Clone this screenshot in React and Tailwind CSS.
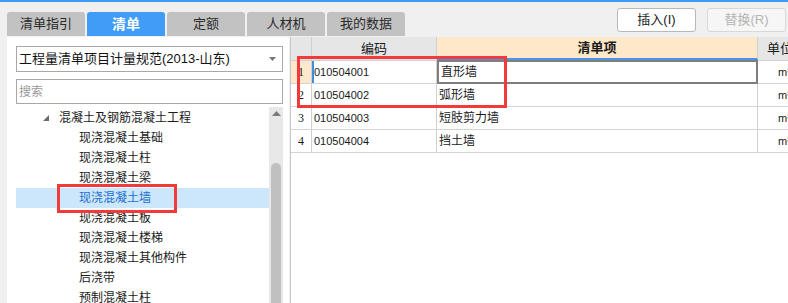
import React from "react";

const F = { fontFamily: '"Liberation Sans", "Noto Sans CJK SC", sans-serif' };

const tabs = ["清单指引", "清单", "定额", "人材机", "我的数据"];
const tree = [
  { t: "混凝土及钢筋混凝土工程", lvl: 0 },
  { t: "现浇混凝土基础", lvl: 1 },
  { t: "现浇混凝土柱", lvl: 1 },
  { t: "现浇混凝土梁", lvl: 1 },
  { t: "现浇混凝土墙", lvl: 1, sel: true },
  { t: "现浇混凝土板", lvl: 1 },
  { t: "现浇混凝土楼梯", lvl: 1 },
  { t: "现浇混凝土其他构件", lvl: 1 },
  { t: "后浇带", lvl: 1 },
  { t: "预制混凝土柱", lvl: 1 },
];
const rows = [
  ["1", "010504001", "直形墙"],
  ["2", "010504002", "弧形墙"],
  ["3", "010504003", "短肢剪力墙"],
  ["4", "010504004", "挡土墙"],
];

export default function App() {
  return (
    <div className="relative w-[788px] h-[303px] overflow-hidden bg-[#f0f0f0] text-[#1a1a1a]" style={F}>
      <div className="h-[2px] bg-[#3d9cf2]" />
      {/* top bar */}
      <div className="flex h-[35px] justify-between">
        <div className="flex items-end gap-[2px] pl-[7px] pb-[1px]">
          {tabs.map((t, i) => (
            <div
              key={t}
              className={
                "w-[78px] h-[24px] rounded-t-[3px] flex items-center justify-center " +
                (i === 1
                  ? "bg-[#409cf7] text-white text-[14px] font-bold"
                  : "bg-[#c2c2c2] text-[#2a2a2a] text-[13px]")
              }
            >
              {t}
            </div>
          ))}
        </div>
        <div className="flex gap-[11px] pt-[6px] pr-[2px]">
          <div className="w-[79px] h-[24px] rounded-[3px] border border-[#b8b8b8] bg-white flex items-center justify-center text-[13px] text-[#222]">
            插入(I)
          </div>
          <div className="w-[79px] h-[24px] rounded-[3px] border border-[#d8d8d8] bg-[#f6f6f6] flex items-center justify-center text-[13px] text-[#b4b4b4]">
            替换(R)
          </div>
        </div>
      </div>
      {/* content */}
      <div className="flex h-[266px]">
        {/* left panel */}
        <div className="ml-[7px] w-[282px] shrink-0 bg-white pt-[9px] pl-[9px] pr-[6px] flex flex-col">
          <div className="h-[26px] border border-[#a8a8a8] flex items-center justify-between pl-[2px] pr-[5px] text-[13px] text-[#111]">
            <span>工程量清单项目计量规范(2013-山东)</span>
            <svg width="8" height="5" viewBox="0 0 8 5"><path d="M0 0h7L3.5 4z" fill="#777" /></svg>
          </div>
          <div className="mt-[7px] h-[25px] border border-[#a8a8a8] flex items-center pl-[2px] text-[12px] text-[#9a9a9a]">
            搜索
          </div>
          <div className="mt-[3px] flex flex-1 min-h-0">
            <div className="flex-1 pt-[1px]">
              {tree.map((n) => (
                <div
                  key={n.t}
                  className={
                    "h-[20px] flex items-center text-[12px] " +
                    (n.sel ? "bg-[#cce6fb] text-[#1a6fd0]" : "")
                  }
                >
                  {n.lvl === 0 ? (
                    <>
                      <svg className="ml-[27px] mr-[10px]" width="6" height="6" viewBox="0 0 6 6"><path d="M6 0V6H0z" fill="#6a6a6a" /></svg>
                      <span>{n.t}</span>
                    </>
                  ) : (
                    <span className="ml-[63px]">{n.t}</span>
                  )}
                </div>
              ))}
            </div>
            <div className="w-[14px] bg-[#e8e8e8] flex flex-col items-center">
              <svg className="mt-[4px]" width="9" height="5" viewBox="0 0 9 5"><path d="M0 5L4.5 0L9 5z" fill="#7a7a7a" /></svg>
              <div className="mt-[47px] w-[10px] flex-1 rounded-t-[5px] bg-[#c0c0c0]" />
            </div>
          </div>
        </div>
        {/* table */}
        <div className="flex-1 min-w-0 overflow-hidden ml-[1px] bg-white border-l border-[#c8c8c8] text-[12px]">
          <div className="flex h-[24px] border-b border-[#d0d0d0]">
            <div className="w-[21px] shrink-0 bg-[#e6e6e6] border-r border-[#d0d0d0]" />
            <div className="w-[125px] shrink-0 bg-[#e6e6e6] border-r border-[#d0d0d0] flex items-center justify-center text-[13px]">编码</div>
            <div className="w-[321px] shrink-0 bg-[#fde8c9] border-r border-[#d0d0d0] flex items-center justify-center text-[13px] font-bold border-b-2 border-b-[#4a94e6]">清单项</div>
            <div className="w-[60px] shrink-0 bg-[#e6e6e6] flex items-center pl-[9px] text-[13px] whitespace-nowrap">单位</div>
          </div>
          {rows.map((r, i) => (
            <div key={r[0]} className="flex h-[23px] border-b border-[#d4d4d4]">
              <div
                className={
                  "w-[21px] shrink-0 border-r border-[#d0d0d0] flex items-center justify-center text-[12px] " +
                  (i === 0 ? "bg-[#fde8cc]" : "bg-white")
                }
                style={{ fontFamily: '"Liberation Serif", serif' }}
              >
                {r[0]}
              </div>
              <div
                className={
                  "w-[125px] shrink-0 border-r border-[#d0d0d0] flex items-center text-[11px] " +
                  (i === 0 ? "border-l-2 border-l-[#3d8fe6] pl-0" : "pl-[2px]")
                }
              >
                {r[1]}
              </div>
              <div
                className={
                  "w-[321px] shrink-0 flex items-center pl-[2px] text-[12px] " +
                  (i === 0 ? "border-2 border-[#7e7e7e] -mt-[1px] h-[24px]" : "border-r border-[#d0d0d0]")
                }
              >
                {r[2]}
              </div>
              <div className="w-[60px] shrink-0 flex items-center pl-[20px] text-[11px]">m³</div>
            </div>
          ))}
        </div>
      </div>
      {/* red highlight boxes */}
      <div className="absolute left-[57px] top-[184px] w-[120px] h-[29px] border-[3px] border-[#f23a3a]" />
      <div className="absolute left-[297px] top-[56px] w-[210px] h-[52px] border-[3px] border-[#f23a3a]" />
    </div>
  );
}
